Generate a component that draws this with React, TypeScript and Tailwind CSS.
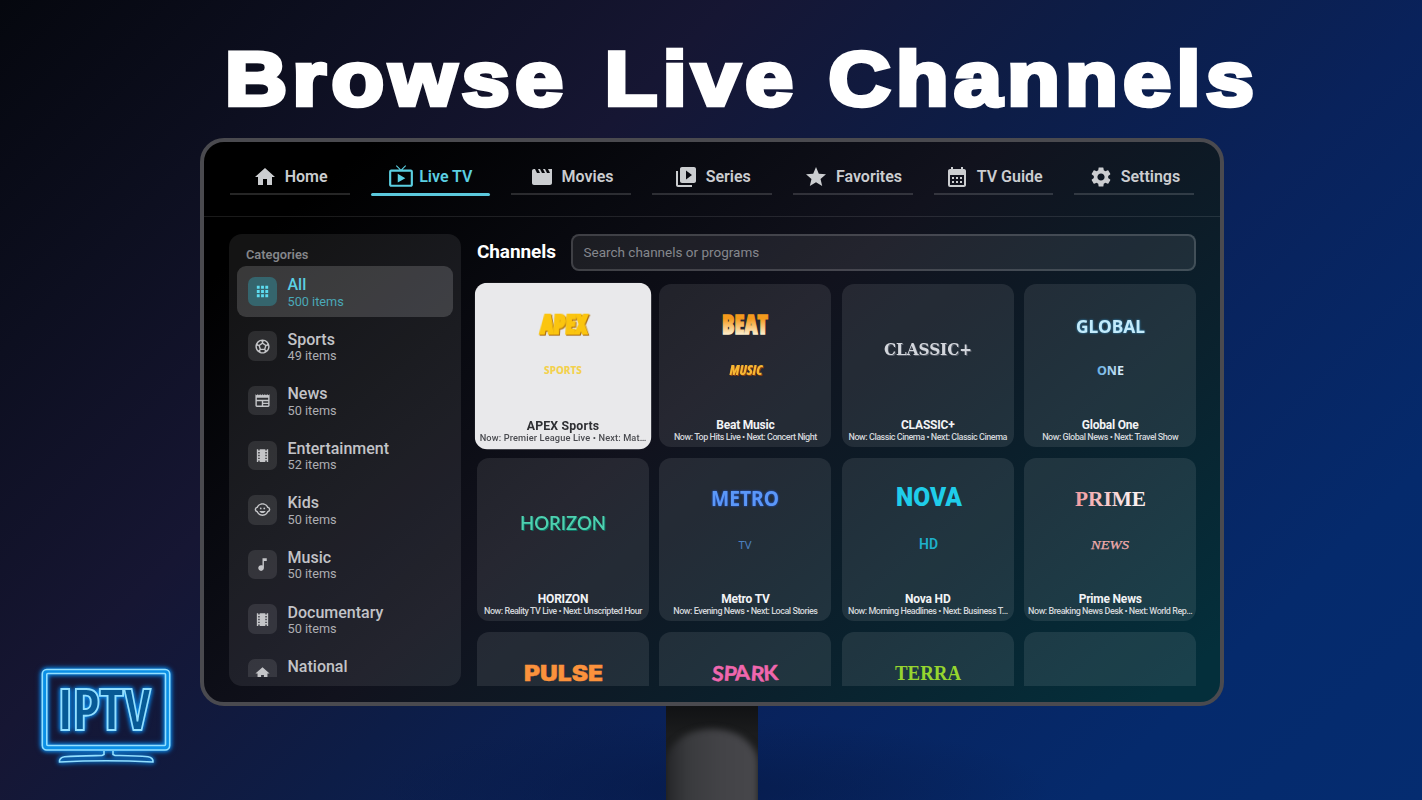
import type { ReactNode } from 'react'
import type { IconType } from 'react-icons'
import {
  MdApps,
  MdCalendarMonth,
  MdChildCare,
  MdHome,
  MdLiveTv,
  MdMovie,
  MdMusicNote,
  MdNewspaper,
  MdSettings,
  MdSportsSoccer,
  MdStar,
  MdTheaters,
  MdVideoLibrary,
} from 'react-icons/md'

const NAV: { label: string; icon: IconType; active?: boolean }[] = [
  { label: 'Home', icon: MdHome },
  { label: 'Live TV', icon: MdLiveTv, active: true },
  { label: 'Movies', icon: MdMovie },
  { label: 'Series', icon: MdVideoLibrary },
  { label: 'Favorites', icon: MdStar },
  { label: 'TV Guide', icon: MdCalendarMonth },
  { label: 'Settings', icon: MdSettings },
]

const CATEGORIES: { name: string; count?: number; icon: IconType; active?: boolean }[] = [
  { name: 'All', count: 500, icon: MdApps, active: true },
  { name: 'Sports', count: 49, icon: MdSportsSoccer },
  { name: 'News', count: 50, icon: MdNewspaper },
  { name: 'Entertainment', count: 52, icon: MdTheaters },
  { name: 'Kids', count: 50, icon: MdChildCare },
  { name: 'Music', count: 50, icon: MdMusicNote },
  { name: 'Documentary', count: 50, icon: MdTheaters },
  { name: 'National', icon: MdHome },
]

// One line of a channel logo, stretched to an exact width
function LogoText({
  x,
  y,
  w,
  size,
  font,
  fill,
  weight = 700,
  italic = false,
  className = '',
  stroke,
  strokeWidth = 0.8,
  rotate,
  children,
}: {
  x: number
  y: number
  w: number
  size: number
  font: string
  fill: string
  weight?: number
  italic?: boolean
  className?: string
  stroke?: string
  strokeWidth?: number
  rotate?: string
  children: string
}) {
  return (
    <text
      x={x}
      y={y}
      textLength={w}
      lengthAdjust="spacingAndGlyphs"
      fontSize={size}
      fontFamily={font}
      fontWeight={weight}
      fontStyle={italic ? 'italic' : 'normal'}
      fill={fill}
      stroke={stroke}
      strokeWidth={stroke ? strokeWidth : undefined}
      rotate={rotate}
      className={className}
    >
      {children}
    </text>
  )
}

const SANS = 'Noto Sans, sans-serif'
const SERIF = 'Liberation Serif, serif'

const CHANNELS: { name: string; epg: string; logo: ReactNode; focused?: boolean }[] = [
  {
    name: 'APEX Sports',
    epg: 'Now: Premier League Live • Next: Mat…',
    focused: true,
    logo: (
      <>
        <LogoText x={64} y={50} w={46} size={26} weight={800} font="Open Sans, sans-serif" fill="#fbc50f" stroke="#fbc50f" strokeWidth={2} className="[font-stretch:75%] [transform-box:fill-box] [transform-origin:center] [transform:skewX(-4deg)] [filter:drop-shadow(1.5px_1.5px_0_#a8690c)]">
          APEX
        </LogoText>
        <LogoText x={67.5} y={89.5} w={37} size={9.5} weight={800} font={SANS} fill="#f3d14e">
          SPORTS
        </LogoText>
      </>
    ),
  },
  {
    name: 'Beat Music',
    epg: 'Now: Top Hits Live • Next: Concert Night',
    logo: (
      <>
        <LogoText x={63} y={50} w={46} size={26} weight={800} font="Open Sans, sans-serif" fill="url(#beat)" stroke="url(#beat)" strokeWidth={1.3} className="[font-stretch:75%]">
          BEAT
        </LogoText>
        <LogoText x={70.5} y={91} w={33} size={13.5} weight={800} italic font="Open Sans, sans-serif" fill="#f7b733" className="[font-stretch:75%] [filter:drop-shadow(1px_1px_0_#8a3d10)]">
          MUSIC
        </LogoText>
      </>
    ),
  },
  {
    name: 'CLASSIC+',
    epg: 'Now: Classic Cinema • Next: Classic Cinema',
    logo: (
      <LogoText x={42} y={71} w={88} size={16.5} font="DejaVu Serif, serif" fill="#d3d6dc" className="[filter:drop-shadow(1px_1px_0_#555b66)]">
        CLASSIC+
      </LogoText>
    ),
  },
  {
    name: 'Global One',
    epg: 'Now: Global News • Next: Travel Show',
    logo: (
      <>
        <LogoText x={52} y={48.5} w={69} size={17.5} font={SANS} fill="#c3ebfb" className="[filter:drop-shadow(0_0_1px_#2f8fc4)]">
          GLOBAL
        </LogoText>
        <LogoText x={73} y={91} w={27} size={12} weight={700} font={SANS} fill="url(#one)">
          ONE
        </LogoText>
      </>
    ),
  },
  {
    name: 'HORIZON',
    epg: 'Now: Reality TV Live • Next: Unscripted Hour',
    logo: (
      <LogoText x={43} y={71.5} w={86} size={19} weight={600} font="Lato, sans-serif" fill="#4fd1b0" className="[filter:drop-shadow(1px_1px_0_#0d6b5e)]">
        HORIZON
      </LogoText>
    ),
  },
  {
    name: 'Metro TV',
    epg: 'Now: Evening News • Next: Local Stories',
    logo: (
      <>
        <LogoText x={52} y={48} w={68} size={21} font={SANS} fill="#5b97f8" className="[filter:drop-shadow(0_0_1px_#2458d8)]">
          METRO
        </LogoText>
        <LogoText x={79.5} y={90.5} w={13} size={11.5} weight={400} font={SANS} fill="#4c80c0">
          TV
        </LogoText>
      </>
    ),
  },
  {
    name: 'Nova HD',
    epg: 'Now: Morning Headlines • Next: Business T…',
    logo: (
      <>
        <LogoText x={54} y={47.5} w={66} size={26} weight={900} font="Roboto, sans-serif" fill="#1fcdea">
          NOVA
        </LogoText>
        <LogoText x={77} y={90.5} w={19} size={14} weight={600} font="Roboto, sans-serif" fill="#1eb0cb">
          HD
        </LogoText>
      </>
    ),
  },
  {
    name: 'Prime News',
    epg: 'Now: Breaking News Desk • Next: World Rep…',
    logo: (
      <>
        <LogoText x={51} y={48} w={71} size={21} font={SERIF} fill="url(#prime)">
          PRIME
        </LogoText>
        <LogoText x={67} y={90.5} w={38} size={13.5} weight={400} italic font={SERIF} fill="#f2acac" stroke="#f2acac" strokeWidth={0.25}>
          NEWS
        </LogoText>
      </>
    ),
  },
  {
    name: '',
    epg: '',
    logo: (
      <LogoText x={47} y={49} w={79} size={21} weight={900} font="Inter, sans-serif" fill="#fb923c" stroke="#fb923c" strokeWidth={0.4}>
        PULSE
      </LogoText>
    ),
  },
  {
    name: '',
    epg: '',
    logo: (
      <LogoText x={52.5} y={48.5} w={67} size={20.5} weight={700} font="Lato, sans-serif" fill="#f067ae" stroke="#f067ae" strokeWidth={0.5} rotate="5 4 -4 4 -3">
        SPARK
      </LogoText>
    ),
  },
  {
    name: '',
    epg: '',
    logo: (
      <LogoText x={53} y={48} w={66} size={20.5} font={SERIF} fill="#96d52f">
        TERRA
      </LogoText>
    ),
  },
  { name: '', epg: '', logo: null },
]

function LogoGradients() {
  return (
    <svg className="absolute size-0">
      <defs>
        <linearGradient id="beat" x1="0" y1="0" x2="0" y2="1">
          <stop offset="0.35" stopColor="#f49a1c" />
          <stop offset="0.8" stopColor="#fdf0d0" />
        </linearGradient>
        <linearGradient id="one">
          <stop offset="0.1" stopColor="#6fb4e6" />
          <stop offset="1" stopColor="#e3f3fc" />
        </linearGradient>
        <linearGradient id="prime">
          <stop offset="0" stopColor="#f29a9e" />
          <stop offset="0.8" stopColor="#fbeeee" />
        </linearGradient>
      </defs>
    </svg>
  )
}

function TopNav() {
  return (
    <nav className="flex h-[75px] shrink-0 gap-[21px] border-b border-white/10 px-[26px] pt-[15px]">
      {NAV.map(({ label, icon: Icon, active }) => (
        <div key={label} className={`flex flex-1 flex-col ${active ? 'text-[#5bcfe2]' : 'text-[#cbcdd0]'}`}>
          <div className={`flex h-[36px] items-center justify-center gap-[7.5px] pt-[3px] ${active ? 'pr-px' : 'pl-px'}`}>
            <Icon size={active ? 26 : 24} className={active ? '-mt-px -mr-0.5' : ''} />
            <span className="pt-px text-[16px] leading-none font-semibold whitespace-nowrap">{label}</span>
          </div>
          <div className={active ? 'h-[3px] rounded-full bg-[#5bc8dc]' : 'h-[1.5px] bg-white/15'} />
        </div>
      ))}
    </nav>
  )
}

function Sidebar() {
  return (
    <aside className="flex h-[452px] w-[232px] shrink-0 flex-col rounded-[13px] bg-white/8 px-2 pb-[9px]">
      <div className="h-[32px] shrink-0 pt-[13px] pl-[9px] text-[12.8px] leading-[16px] font-semibold text-[#85868a]">Categories</div>
      <div className="flex min-h-0 flex-col gap-[3.6px] overflow-hidden">
        {CATEGORIES.map(({ name, count, icon: Icon, active }) => (
          <div key={name} className={`flex h-[51px] shrink-0 items-center gap-[10.5px] rounded-[9px] pl-[10.5px] ${active ? 'bg-white/16' : ''}`}>
            <div className={`flex size-[29.5px] items-center justify-center rounded-[7px] ${active ? 'bg-[#35656d] text-[#5ddcf0]' : 'bg-white/10 text-[#c4c5c8]'}`}>
              <Icon size={17} />
            </div>
            <div className={`h-[33px] pt-px ${active ? 'text-[#5bcfe2]' : 'text-[#c2c3c7]'}`}>
              <div className="text-[16px] leading-[17.5px] font-medium">{name}</div>
              {count && <div className={`text-[12.7px] leading-[15.5px] ${active ? 'text-[#4aa9b8]' : 'text-[#adaeb2]'}`}>{count} items</div>}
            </div>
          </div>
        ))}
      </div>
    </aside>
  )
}

function ChannelCard({ name, epg, logo, focused }: (typeof CHANNELS)[number]) {
  return (
    <div className={`flex h-[163.5px] flex-col rounded-[12px] ${focused ? 'relative scale-x-[1.026] scale-y-[1.015] bg-[#e9e9eb]' : 'bg-white/9'}`}>
      <svg viewBox="0 0 172 134" className="h-[134px] w-[172px] shrink-0">
        {logo}
      </svg>
      {name && (
        <>
          <div className={`text-center text-[12px] leading-[14px] font-bold ${focused ? 'tracking-[0.15px] text-[#2e2f33]' : 'tracking-[-0.2px] text-[#f2f3f5]'}`}>{name}</div>
          <div className={`text-center text-[9px] leading-[11px] font-medium whitespace-nowrap ${focused ? 'tracking-[0.12px] text-[#4a4b50]' : 'tracking-[-0.47px] text-[#d3d6da]'}`}>{epg}</div>
        </>
      )}
    </div>
  )
}

function Screen() {
  return (
    <div className="relative flex h-[568px] w-[1024px] flex-col overflow-hidden rounded-[24px] border-4 border-[#4a4a4f] bg-[linear-gradient(140deg,#000_10%,#08090f_28%,#11121d_47%,#0b1f2b_70%,#042f3b_96%)]">
      <TopNav />
      <div className="flex gap-[15px] pt-[17px] pl-[25px]">
        <Sidebar />
        <main className="flex w-[720px] flex-col">
          <div className="flex h-[37px] shrink-0 items-center">
            <h2 className="w-[95px] pl-px text-[19px] font-bold tracking-[-0.1px] text-white">Channels</h2>
            <div className="flex h-[37px] flex-1 items-center rounded-[8px] border-2 border-white/16 bg-white/8 pl-[10.5px] text-[13.5px] text-[#85878d]">
              Search channels or programs
            </div>
          </div>
          {/* grid is cut off by the bottom edge of the panel */}
          <div className="-ml-2 h-[415px] shrink-0 overflow-hidden pt-[3px] pl-[9px]">
            <div className="grid grid-cols-[repeat(4,172px)] gap-x-[10.4px] gap-y-[10.5px] pt-[9.5px]">
              {CHANNELS.map((channel, i) => (
                <ChannelCard key={i} {...channel} />
              ))}
            </div>
          </div>
        </main>
      </div>
    </div>
  )
}

function IptvLogo() {
  return (
    <svg
      viewBox="0 0 150 110"
      fill="none"
      className="absolute top-[660px] left-[31px] h-[110px] w-[150px] [filter:drop-shadow(0_0_2px_#0a8ce5)_drop-shadow(0_0_2px_#0a6fd0)]"
    >
      <rect x="13.5" y="11.5" width="123" height="76.2" rx="3" stroke="#0a8fe6" strokeWidth="4.5" />
      <g stroke="#92dfff" strokeWidth="1.6">
        <rect x="11.3" y="9.5" width="127.4" height="80.5" rx="4.5" />
        <rect x="15.8" y="13.5" width="118.7" height="72" rx="1" />
        <path d="M73 91v3.500l-2 1c-12 .2-25 .2-37.500 1.200-3.500.6-5.500 2.700-5 5.300 15-.8 31-1.300 46.500-1.300s32 .5 47 1.300c.5-2.600-1.500-4.700-5-5.300-12.500-1-21-1-33-1.200l-2-1V91" />
      </g>
      <g fill="#075a96" stroke="#92dfff" strokeWidth="1.800" fontFamily="Open Sans, sans-serif" fontWeight="700" fontSize="57" className="[font-stretch:75%]">
        <text x="26.800" y="70" textLength="15" lengthAdjust="spacingAndGlyphs">I</text>
        <text x="41.300" y="70" textLength="28" lengthAdjust="spacingAndGlyphs">P</text>
        <text x="68" y="70" textLength="25" lengthAdjust="spacingAndGlyphs">T</text>
        <text x="93.300" y="70" textLength="26.500" lengthAdjust="spacingAndGlyphs">V</text>
      </g>
    </svg>
  )
}

export default function App() {
  return (
    <div className="relative flex h-[800px] w-[1422px] flex-col overflow-hidden bg-[radial-gradient(340px_70px_at_712px_790px,#06184399,#06184300),linear-gradient(135deg,#05070e_0%,#0d0f20_16%,#161633_33%,#0d1d47_50%,#09225b_65%,#052a6c_85%,#052c70_100%)] [font-family:Roboto,sans-serif]">
      <LogoGradients />
      <h1 className="ml-[224.5px] flex h-[138px] w-[1000px] shrink-0 origin-left scale-x-[1.13] pt-[34.5px] text-[76px] leading-[88px] font-bold tracking-[4.9px] text-white [-webkit-text-stroke:4.5px_white] [font-family:'Liberation_Sans',sans-serif]">
        <span className="w-[336px]">Browse</span>
        <span className="w-[198px]">Live</span>
        <span>Channels</span>
      </h1>
      <div className="pl-[200px]">
        <Screen />
      </div>
      <div className="ml-[666px] h-[94px] w-[92px] overflow-hidden bg-[linear-gradient(180deg,#111214,#1b1c1d_30%)]">
        <div className="mt-[23px] h-[120px] rounded-t-[50%_34px] bg-[linear-gradient(90deg,#26272a,#3a3b3e_25%,#434347_60%,#47474b)] blur-[3px]" />
      </div>
      <IptvLogo />
    </div>
  )
}
